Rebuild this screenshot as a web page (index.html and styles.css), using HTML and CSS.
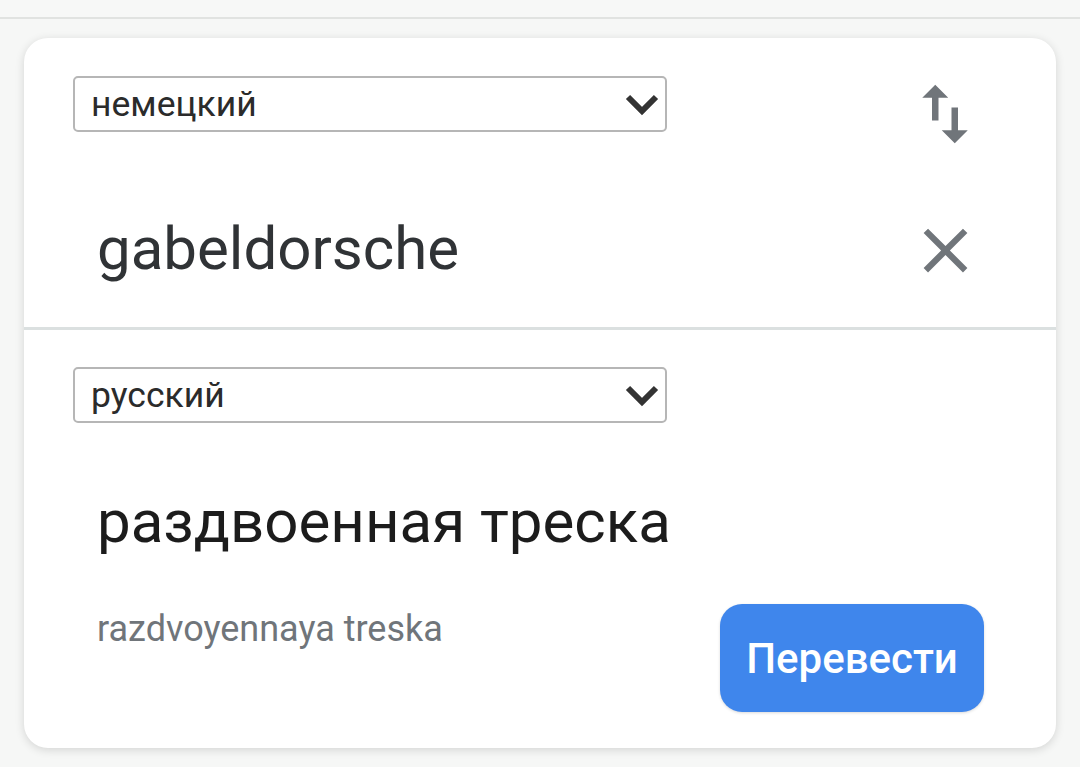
FILE: index.html
```html
<!DOCTYPE html>
<html lang="ru">
<head>
<meta charset="utf-8">
<title>Переводчик</title>
<link rel="stylesheet" href="styles.css">
</head>
<body>
<div class="topbar"></div>
<div class="card">
  <section class="source">
    <div class="row-lang">
      <div class="select">
        <span class="select-text">немецкий</span>
        <svg class="chevron" viewBox="0 0 36 24" width="36" height="24"><polyline points="4,4 18,18 32,4" fill="none" stroke="#333" stroke-width="6"/></svg>
      </div>
      <svg class="swap" viewBox="0 0 24 24" width="78" height="78"><path fill="#70757a" d="M16 17.01V10h-2v7.01h-3L15 21l4-3.99h-3zM9 3L5 6.99h3V14h2V6.99h3L9 3z"/></svg>
    </div>
    <div class="row-input">
      <span class="input-text">gabeldorsche</span>
      <svg class="close" viewBox="0 0 24 24" width="75" height="75"><path fill="#70757a" d="M19 6.41L17.59 5 12 10.59 6.41 5 5 6.41 10.59 12 5 17.59 6.41 19 12 13.41 17.59 19 19 17.59 13.41 12z"/></svg>
    </div>
  </section>
  <div class="divider"></div>
  <section class="target">
    <div class="select">
      <span class="select-text">русский</span>
      <svg class="chevron" viewBox="0 0 36 24" width="36" height="24"><polyline points="4,4 18,18 32,4" fill="none" stroke="#333" stroke-width="6"/></svg>
    </div>
    <div class="translation">раздвоенная треска</div>
    <div class="row-footer">
      <span class="translit">razdvoyennaya treska</span>
      <button class="translate-btn">Перевести</button>
    </div>
  </section>
</div>
</body>
</html>
```
FILE: styles.css
```css
* { box-sizing: border-box; }
html, body {
  margin: 0;
  padding: 0;
  background: #f6f7f6;
  font-family: Roboto, "Noto Sans", "Liberation Sans", sans-serif;
  width: 1080px;
  height: 767px;
  overflow: hidden;
}
.topbar {
  height: 19px;
  background: #f7f8f7;
  border-bottom: 2px solid #e1e3e1;
}
.card {
  margin: 19px 0 0 24px;
  width: 1032px;
  height: 710px;
  background: #fff;
  border-radius: 24px;
  box-shadow: 0 2px 10px rgba(0, 0, 0, 0.14);
  display: flex;
  flex-direction: column;
  overflow: hidden;
}
.source {
  height: 289px;
  padding: 38px 72px 0 49px;
}
.row-lang {
  display: flex;
  justify-content: space-between;
  align-items: flex-start;
}
.select {
  width: 594px;
  height: 56px;
  border: 2px solid #b6b6b6;
  border-radius: 5px;
  display: flex;
  align-items: center;
  justify-content: space-between;
  padding: 0 5px 0 16px;
  flex-shrink: 0;
}
.select-text {
  font-size: 35.5px;
  color: #2b2b2b;
  line-height: 1;
  margin-top: 1px;
}
.chevron { display: block; margin-top: 2px; }
.swap { display: block; margin-top: -1px; }
.row-input {
  margin-top: 56px;
  display: flex;
  justify-content: space-between;
  align-items: center;
  padding: 0 1px 0 24px;
}
.input-text {
  font-size: 60px;
  line-height: 70px;
  color: #303336;
}
.close { display: block; margin-top: 4px; }
.divider {
  height: 3px;
  background: #dbe0e0;
  flex-shrink: 0;
}
.target {
  flex: 1;
  padding: 37px 72px 36px 49px;
  display: flex;
  flex-direction: column;
}
.translation {
  margin-top: 64px;
  padding-left: 24px;
  font-size: 60px;
  line-height: 70px;
  color: #1c1c1c;
}
.row-footer {
  margin-top: auto;
  display: flex;
  justify-content: space-between;
  align-items: flex-start;
  padding-left: 24px;
}
.translit {
  margin-top: 4px;
  font-size: 36px;
  line-height: 42px;
  color: #70757a;
}
.translate-btn {
  width: 264px;
  height: 108px;
  border: none;
  border-radius: 22px;
  background: #3f86ec;
  color: #fff;
  font-family: Roboto, "Noto Sans", sans-serif;
  font-size: 42px;
  font-weight: 500;
  box-shadow: 0 1px 3px rgba(0, 0, 0, 0.15);
  padding: 0;
}
```
